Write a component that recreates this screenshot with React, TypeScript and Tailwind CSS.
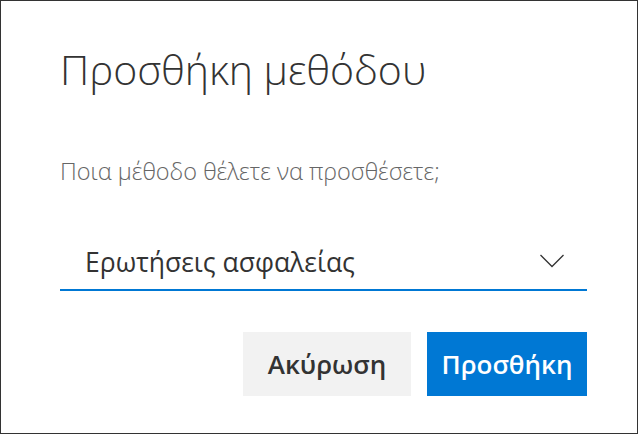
export default function App() {
  return (
    <div className="w-[639px] h-[435px] bg-white">
      <div
        className="w-[638px] h-[434px] border border-[#333333] bg-white pl-[59px] pt-[40px]"
        style={{ fontFamily: '"Open Sans", "Noto Sans", sans-serif' }}
      >
        <div className="w-[527px] flex flex-col">
          <h1 className="text-[41px] leading-[56px] font-light text-[#333333]">Προσθήκη μεθόδου</h1>

          <p className="mt-[58px] text-[23.5px] leading-[32px] font-light text-[#666666]">
            Ποια μέθοδο θέλετε να προσθέσετε;
          </p>

          <div className="mt-[48px] h-[56px] flex items-center justify-between border-b-2 border-[#0078d4]">
            <span className="text-[26.5px] leading-[36px] text-[#333333] pl-[25px]">Ερωτήσεις ασφαλείας</span>
            <svg width="26" height="16" viewBox="0 0 26 16" className="mr-[22px] -mt-[2px]">
              <polyline points="1.5,2 13,13.5 24.5,2" fill="none" stroke="#333333" strokeWidth="1.3" />
            </svg>
          </div>

          <div className="mt-[41px] flex justify-end gap-[16px]">
            <button className="w-[168px] h-[64px] bg-[#f2f2f2] text-[#333333] text-[26px] font-semibold">
              Ακύρωση
            </button>
            <button className="w-[160px] h-[64px] bg-[#0078d4] text-white text-[26px] font-semibold">
              Προσθήκη
            </button>
          </div>
        </div>
      </div>
    </div>
  )
}
